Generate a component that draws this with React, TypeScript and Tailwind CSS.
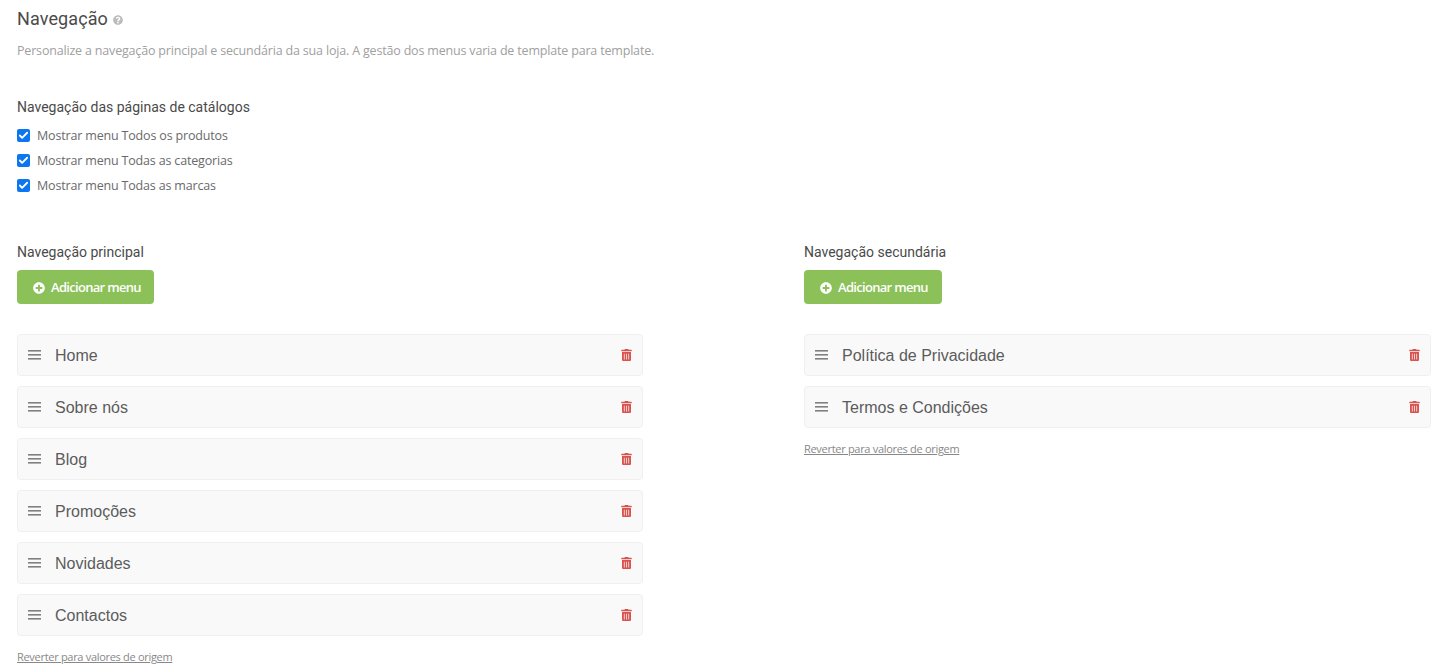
import { Check } from 'lucide-react'
import { FaPlusCircle, FaTrashAlt, FaQuestionCircle } from 'react-icons/fa'

const primaryItems = ['Home', 'Sobre nós', 'Blog', 'Promoções', 'Novidades', 'Contactos']
const secondaryItems = ['Política de Privacidade', 'Termos e Condições']
const catalogOptions = ['Mostrar menu Todos os produtos', 'Mostrar menu Todas as categorias', 'Mostrar menu Todas as marcas']

// Coluna de navegação
function NavColumn({ title, items, width, buttonWidth }: { title: string; items: string[]; width: string; buttonWidth: string }) {
  return (
    <div className={width}>
      <h3 className="text-[14px] leading-[20px] text-[#4a4a4a] font-['Roboto',sans-serif]">{title}</h3>
      <button className={`${buttonWidth} mt-[8px] h-[34px] flex items-center gap-[6px] pl-[16px] pt-[1px] bg-[#8bc158] rounded-[4px] text-white text-[13px] font-semibold font-['Open_Sans',sans-serif] tracking-[-0.69px]`}>
        <FaPlusCircle className="w-[12px] h-[12px]" />
        Adicionar menu
      </button>
      <div className="mt-[30px] space-y-[10px]">
        {items.map((item) => (
          <div key={item} className="h-[42px] flex items-center bg-[#f9f9f9] border border-[#efefef] rounded-[4px] pl-[10px] pr-[10px]">
            <svg viewBox="0 0 13 10" className="w-[13px] h-[10px] text-[#808080]" fill="currentColor">
              <rect x="0" y="0" width="13" height="1.6" />
              <rect x="0" y="4" width="13" height="1.6" />
              <rect x="0" y="8" width="13" height="1.6" />
            </svg>
            <span className="ml-[14px] pt-[1px] flex-1 text-[16px] text-[#5c5c5c] font-['Liberation_Sans',sans-serif]">{item}</span>
            <FaTrashAlt className="w-[11px] h-[12px] text-[#d9534f]" />
          </div>
        ))}
      </div>
      <a className="block mt-[13px] text-[11px] leading-[16px] text-[#888] underline font-['Open_Sans',sans-serif] tracking-[-0.3px]">
        Reverter para valores de origem
      </a>
    </div>
  )
}

export default function App() {
  return (
    <div className="h-[672px] overflow-hidden bg-white pl-[17px] pt-[8px]">
      <div className="flex items-center gap-[5px]">
        <h1 className="text-[18px] leading-[22px] text-[#4a4a4a] font-['Roboto',sans-serif] tracking-[0.1px]">Navegação</h1>
        <FaQuestionCircle className="w-[10px] h-[10px] mt-[2px] text-[#bbb]" />
      </div>
      <p className="mt-[12px] text-[12.5px] leading-[18px] text-[#a0a0a0] font-['Open_Sans',sans-serif] tracking-[-0.18px]">
        Personalize a navegação principal e secundária da sua loja. A gestão dos menus varia de template para template.
      </p>

      <h3 className="mt-[37px] text-[14px] leading-[20px] text-[#4a4a4a] font-['Roboto',sans-serif]">
        Navegação das páginas de catálogos
      </h3>
      <div className="mt-[9px] space-y-[5px]">
        {catalogOptions.map((option) => (
          <label key={option} className="flex items-center h-[20px]">
            <span className="w-[13px] h-[13px] -mt-[2px] rounded-[2px] bg-[#0b76ef] flex items-center justify-center">
              <Check className="w-[11px] h-[11px] text-white" strokeWidth={4} />
            </span>
            <span className="ml-[7px] text-[12.5px] text-[#6a6a6a] font-['Open_Sans',sans-serif] tracking-[-0.17px]">{option}</span>
          </label>
        ))}
      </div>

      <div className="mt-[46px] flex gap-[161px] items-start">
        <NavColumn title="Navegação principal" items={primaryItems} width="w-[626px]" buttonWidth="w-[137px]" />
        <NavColumn title="Navegação secundária" items={secondaryItems} width="w-[627px]" buttonWidth="w-[138px]" />
      </div>
    </div>
  )
}
